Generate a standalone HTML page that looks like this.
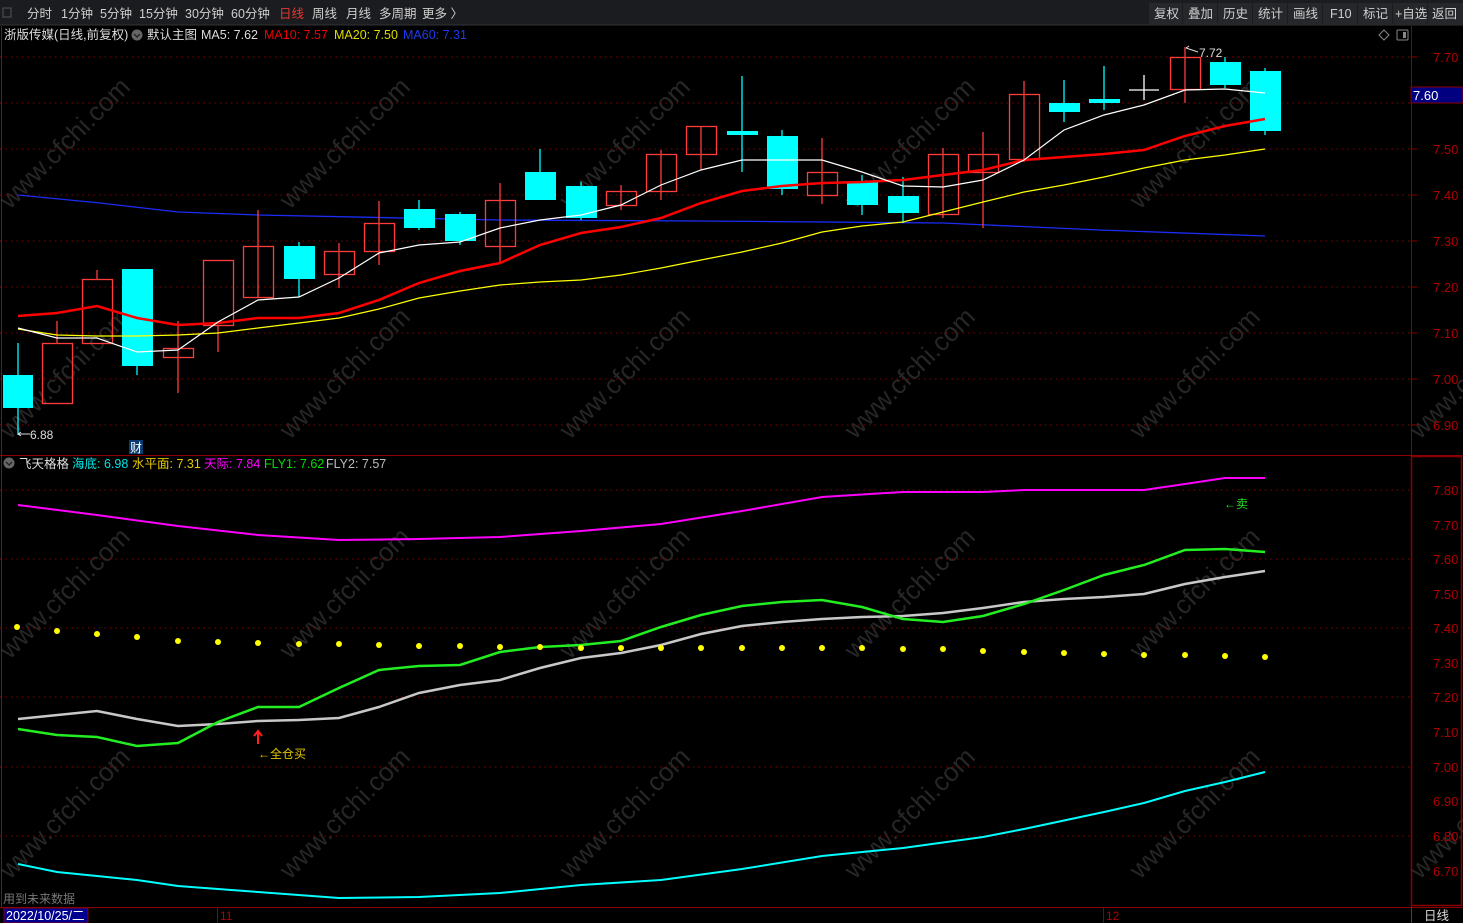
<!DOCTYPE html>
<html><head><meta charset="utf-8"><style>
html,body{margin:0;padding:0;background:#000;width:1463px;height:923px;overflow:hidden;font-family:"Liberation Sans","Noto Sans CJK SC",sans-serif;}
svg{display:block}
</style></head><body>
<svg width="1463" height="923" xmlns="http://www.w3.org/2000/svg" font-family="Liberation Sans, Noto Sans CJK SC, sans-serif">
<rect width="1463" height="923" fill="#000"/>
<!-- toolbar -->
<rect x="0" y="0" width="1463" height="25" fill="#1b1c1f"/>
<line x1="0" y1="25" x2="1463" y2="25" stroke="#333" />
<rect x="3" y="8" width="8" height="9" fill="none" stroke="#555"/>
<g font-size="12.5" fill="#cfcfcf">
<text x="27" y="18">分时</text><text x="61" y="18">1分钟</text><text x="100" y="18">5分钟</text><text x="139" y="18">15分钟</text><text x="185" y="18">30分钟</text><text x="231" y="18">60分钟</text>
<text x="279" y="18" fill="#e53935">日线</text><text x="312" y="18">周线</text><text x="346" y="18">月线</text><text x="379" y="18">多周期</text><text x="422" y="18">更多 〉</text>
</g>
<g fill="#26272b"><rect x="1149" y="3" width="33" height="21"/><rect x="1183" y="3" width="34" height="21"/><rect x="1218" y="3" width="34" height="21"/><rect x="1253" y="3" width="34" height="21"/><rect x="1288" y="3" width="34" height="21"/><rect x="1323" y="3" width="34" height="21"/><rect x="1358" y="3" width="34" height="21"/><rect x="1393" y="3" width="34" height="21"/><rect x="1428" y="3" width="35" height="21"/></g>
<g font-size="12.5" fill="#cfcfcf"><text x="1154" y="18">复权</text><text x="1188" y="18">叠加</text><text x="1223" y="18">历史</text><text x="1258" y="18">统计</text><text x="1293" y="18">画线</text><text x="1330" y="18">F10</text><text x="1363" y="18">标记</text><text x="1395" y="18">+自选</text><text x="1432" y="18">返回</text></g>
<!-- header line -->
<g font-size="12.5">
<text x="4" y="39" fill="#ddd">浙版传媒(日线,前复权)</text>
<circle cx="137" cy="35" r="5.5" fill="#666"/><path d="M134 34 l3 3 l3 -3" stroke="#222" fill="none" stroke-width="1.3"/>
<text x="147" y="39" fill="#ddd">默认主图</text>
<text x="201" y="39" fill="#ddd">MA5: 7.62</text>
<text x="264" y="39" fill="#e00">MA10: 7.57</text>
<text x="334" y="39" fill="#dd0">MA20: 7.50</text>
<text x="403" y="39" fill="#1b3cf0">MA60: 7.31</text>
</g>
<path d="M1384 30 l5 5 l-5 5 l-5 -5z" fill="none" stroke="#888"/>
<rect x="1397" y="30" width="11" height="10" rx="1" fill="none" stroke="#888"/><rect x="1403" y="32" width="3" height="6" fill="#888"/>
<!-- watermarks -->
<g fill="#262626" font-size="26" font-family="Liberation Sans, sans-serif">
<text transform="translate(10,210) rotate(-45)">www.cfchi.com</text>
<text transform="translate(290,210) rotate(-45)">www.cfchi.com</text>
<text transform="translate(570,210) rotate(-45)">www.cfchi.com</text>
<text transform="translate(855,210) rotate(-45)">www.cfchi.com</text>
<text transform="translate(1140,210) rotate(-45)">www.cfchi.com</text>
<text transform="translate(10,440) rotate(-45)">www.cfchi.com</text>
<text transform="translate(290,440) rotate(-45)">www.cfchi.com</text>
<text transform="translate(570,440) rotate(-45)">www.cfchi.com</text>
<text transform="translate(855,440) rotate(-45)">www.cfchi.com</text>
<text transform="translate(1140,440) rotate(-45)">www.cfchi.com</text>
<text transform="translate(1420,440) rotate(-45)">www.cfchi.com</text>
<text transform="translate(10,660) rotate(-45)">www.cfchi.com</text>
<text transform="translate(290,660) rotate(-45)">www.cfchi.com</text>
<text transform="translate(570,660) rotate(-45)">www.cfchi.com</text>
<text transform="translate(855,660) rotate(-45)">www.cfchi.com</text>
<text transform="translate(1140,660) rotate(-45)">www.cfchi.com</text>
<text transform="translate(10,880) rotate(-45)">www.cfchi.com</text>
<text transform="translate(290,880) rotate(-45)">www.cfchi.com</text>
<text transform="translate(570,880) rotate(-45)">www.cfchi.com</text>
<text transform="translate(855,880) rotate(-45)">www.cfchi.com</text>
<text transform="translate(1140,880) rotate(-45)">www.cfchi.com</text>
<text transform="translate(1420,880) rotate(-45)">www.cfchi.com</text>
</g>
<!-- main grid -->
<g stroke="#8a0000" stroke-dasharray="1.5,4" stroke-width="1">
<line x1="0" y1="57" x2="1410" y2="57"/><line x1="0" y1="103" x2="1410" y2="103"/><line x1="0" y1="149" x2="1410" y2="149"/><line x1="0" y1="195" x2="1410" y2="195"/><line x1="0" y1="241" x2="1410" y2="241"/><line x1="0" y1="287" x2="1410" y2="287"/><line x1="0" y1="333" x2="1410" y2="333"/><line x1="0" y1="379" x2="1410" y2="379"/><line x1="0" y1="425" x2="1410" y2="425"/>
<line x1="0" y1="490" x2="1410" y2="490"/><line x1="0" y1="559" x2="1410" y2="559"/><line x1="0" y1="628" x2="1410" y2="628"/><line x1="0" y1="697" x2="1410" y2="697"/><line x1="0" y1="767" x2="1410" y2="767"/><line x1="0" y1="836" x2="1410" y2="836"/>
</g>
<line x1="1.5" y1="26" x2="1.5" y2="907" stroke="#333"/>
<!-- right axis -->
<line x1="1411.5" y1="26" x2="1411.5" y2="907" stroke="#8a0000"/>
<line x1="0" y1="455.5" x2="1463" y2="455.5" stroke="#8a0000"/>
<rect x="1411.5" y="456.5" width="50" height="449" fill="none" stroke="#8a0000" stroke-width="1.5"/>
<g stroke="#8a0000"><line x1="1411" y1="57" x2="1417" y2="57"/><line x1="1411" y1="149" x2="1417" y2="149"/><line x1="1411" y1="195" x2="1417" y2="195"/><line x1="1411" y1="241" x2="1417" y2="241"/><line x1="1411" y1="287" x2="1417" y2="287"/><line x1="1411" y1="333" x2="1417" y2="333"/><line x1="1411" y1="379" x2="1417" y2="379"/><line x1="1411" y1="425" x2="1417" y2="425"/></g>
<g font-size="13" fill="#b00000">
<text x="1433" y="62">7.70</text><text x="1433" y="154">7.50</text><text x="1433" y="200">7.40</text><text x="1433" y="246">7.30</text><text x="1433" y="292">7.20</text><text x="1433" y="338">7.10</text><text x="1433" y="384">7.00</text><text x="1433" y="430">6.90</text>
<text x="1433" y="495">7.80</text><text x="1433" y="530">7.70</text><text x="1433" y="564">7.60</text><text x="1433" y="599">7.50</text><text x="1433" y="633">7.40</text><text x="1433" y="668">7.30</text><text x="1433" y="702">7.20</text><text x="1433" y="737">7.10</text><text x="1433" y="772">7.00</text><text x="1433" y="806">6.90</text><text x="1433" y="841">6.80</text><text x="1433" y="876">6.70</text>
</g>
<rect x="1411" y="87" width="52" height="16" fill="#000080" stroke="#8a0000"/>
<text x="1413" y="100" font-size="13" fill="#fff">7.60</text>
<!-- MA60 blue -->
<polyline fill="none" stroke="#1b2cf5" stroke-width="1.3" points="18,195 100,203 178,212 258,215 500,220 700,221 943,223 1100,230 1265,236"/>
<!-- candles -->
<g stroke-width="1.3">
<!-- wicks -->
<g stroke="#00ffff">
<line x1="18" y1="343" x2="18" y2="435"/><line x1="137" y1="269" x2="137" y2="375"/><line x1="299" y1="242" x2="299" y2="297"/><line x1="419" y1="200" x2="419" y2="230"/><line x1="460" y1="212" x2="460" y2="245"/><line x1="540" y1="149" x2="540" y2="200"/><line x1="581" y1="182" x2="581" y2="220"/><line x1="742" y1="76" x2="742" y2="172"/><line x1="782" y1="130" x2="782" y2="195"/><line x1="862" y1="175" x2="862" y2="215"/><line x1="903" y1="177" x2="903" y2="223"/><line x1="1064" y1="80" x2="1064" y2="122"/><line x1="1104" y1="66" x2="1104" y2="110"/><line x1="1225" y1="57" x2="1225" y2="88"/><line x1="1265" y1="68" x2="1265" y2="135"/>
</g>
<g stroke="#ff3c3c">
<line x1="57" y1="321" x2="57" y2="343"/><line x1="97" y1="270" x2="97" y2="279"/><line x1="178" y1="321" x2="178" y2="393"/><line x1="218" y1="325" x2="218" y2="352"/><line x1="258" y1="210" x2="258" y2="297"/><line x1="339" y1="243" x2="339" y2="288"/><line x1="379" y1="201" x2="379" y2="265"/><line x1="500" y1="183" x2="500" y2="262"/><line x1="621" y1="185" x2="621" y2="210"/><line x1="661" y1="150" x2="661" y2="200"/><line x1="701" y1="126" x2="701" y2="170"/><line x1="822" y1="138" x2="822" y2="204"/><line x1="943" y1="148" x2="943" y2="218"/><line x1="983" y1="132" x2="983" y2="228"/><line x1="1024" y1="81" x2="1024" y2="162"/><line x1="1185" y1="47" x2="1185" y2="103"/>
</g>
<!-- cyan bodies -->
<g fill="#00ffff">
<rect x="3" y="375" width="30" height="33"/><rect x="122" y="269" width="31" height="97"/><rect x="284" y="246" width="31" height="33"/><rect x="404" y="209" width="31" height="19"/><rect x="445" y="214" width="31" height="27"/><rect x="525" y="172" width="31" height="28"/><rect x="566" y="186" width="31" height="32"/><rect x="727" y="131" width="31" height="4"/><rect x="767" y="136" width="31" height="53"/><rect x="847" y="182" width="31" height="23"/><rect x="888" y="196" width="31" height="17"/><rect x="1049" y="103" width="31" height="9"/><rect x="1089" y="99" width="31" height="4"/><rect x="1210" y="62" width="31" height="23"/><rect x="1250" y="71" width="31" height="60"/>
</g>
<!-- red hollow bodies -->
<g fill="none" stroke="#ff3c3c">
<rect x="42.5" y="343.5" width="30" height="60"/><rect x="82.5" y="279.5" width="30" height="64"/><rect x="163.5" y="348.5" width="30" height="9"/><rect x="203.5" y="260.5" width="30" height="65"/><rect x="243.5" y="246.5" width="30" height="51"/><rect x="324.5" y="251.5" width="30" height="23"/><rect x="364.5" y="223.5" width="30" height="28"/><rect x="485.5" y="200.5" width="30" height="46"/><rect x="606.5" y="191.5" width="30" height="14"/><rect x="646.5" y="154.5" width="30" height="37"/><rect x="686.5" y="126.5" width="30" height="28"/><rect x="807.5" y="172.5" width="30" height="23"/><rect x="928.5" y="154.5" width="30" height="60"/><rect x="968.5" y="154.5" width="30" height="18"/><rect x="1009.5" y="94.5" width="30" height="65"/><rect x="1170.5" y="57.5" width="30" height="32"/>
</g>
<g stroke="#fff"><line x1="1129" y1="90" x2="1159" y2="90"/><line x1="1144" y1="75" x2="1144" y2="100"/></g>
</g>
<!-- MAs -->
<polyline fill="none" stroke="#ffff00" stroke-width="1.2" points="18,329 57,335 97,336 137,336 178,335 218,333 258,328 299,323 339,318 379,309 419,298 460,291 500,285 540,282 581,280 621,275 661,268 701,260 742,252 782,243 822,232 862,226 903,222 943,212 983,202 1024,192 1064,185 1104,177 1144,168 1185,160 1225,155 1265,149"/>
<polyline fill="none" stroke="#ff0000" stroke-width="2.5" points="18,316 57,313 97,306 137,318 178,325 218,323 258,318 299,318 339,313 379,300 419,283 460,271 500,263 540,245 581,233 621,227 661,218 701,203 742,191 782,186 822,183 862,182 903,180 943,175 983,170 1024,160 1064,157 1104,154 1144,150 1185,136 1225,126 1265,119"/>
<polyline fill="none" stroke="#ffffff" stroke-width="1.2" points="18,328 57,338 97,338 137,352 178,350 218,322 258,300 299,297 339,278 379,253 419,245 460,242 500,228 540,220 581,215 621,205 661,185 701,170 742,160 782,160 822,160 862,172 903,186 943,187 983,180 1024,160 1064,130 1104,115 1144,105 1185,90 1225,89 1265,93"/>
<text x="30" y="439" font-size="12" fill="#ddd">6.88</text><path d="M18 434 h12 M18 434 l3 -2 M18 434 l3 2" stroke="#ddd"/>
<text x="1199" y="57" font-size="12" fill="#ddd">7.72</text><path d="M1186 48 l12 4 M1186 48 l3 -2" stroke="#ddd" fill="none"/>
<rect x="129" y="440" width="14" height="14" fill="#0a3a70"/><text x="130" y="452" font-size="12" fill="#fff">财</text>
<!-- lower panel header -->
<circle cx="9" cy="463" r="5.5" fill="#666"/><path d="M6 462 l3 3 l3 -3" stroke="#222" fill="none" stroke-width="1.3"/>
<g font-size="12.5"><text x="19" y="468" fill="#ddd">飞天格格</text><text x="72" y="468" fill="#00e5e5">海底: 6.98</text><text x="132" y="468" fill="#e5c800">水平面: 7.31</text><text x="204" y="468" fill="#ff00ff">天际: 7.84</text><text x="264" y="468" fill="#00e000">FLY1: 7.62</text><text x="326" y="468" fill="#bbb">FLY2: 7.57</text></g>
<!-- lower lines -->
<polyline fill="none" stroke="#ff00ff" stroke-width="2" points="18,505 97,515 178,526 258,535 339,540 419,539 500,537 581,531 661,524 742,511 822,497 903,492 983,492 1024,490 1144,490 1185,484 1225,478 1265,478"/>
<polyline fill="none" stroke="#c8c8c8" stroke-width="2.5" points="18,719 97,711 137,719 178,726 218,724 258,721 299,720 339,718 379,707 419,693 460,685 500,680 540,668 581,658 621,653 661,645 701,634 742,626 782,622 822,619 862,617 903,616 943,613 983,608 1024,602 1064,599 1104,597 1144,594 1185,584 1225,577 1265,571"/>
<polyline fill="none" stroke="#22ee22" stroke-width="2.5" points="18,729 57,735 97,737 137,746 178,743 218,722 258,707 299,707 339,688 379,670 419,666 460,665 500,652 540,647 581,645 621,641 661,627 701,615 742,606 782,602 822,600 862,607 903,619 943,622 983,616 1024,604 1064,590 1104,575 1144,565 1185,550 1225,549 1265,552"/>
<polyline fill="none" stroke="#00ffff" stroke-width="2" points="18,864 57,872 137,880 178,886 258,892 339,898 419,897 500,893 581,885 661,880 742,869 822,856 903,848 983,837 1024,829 1104,812 1144,803 1185,791 1225,782 1265,772"/>
<g fill="#ffff00">
<circle cx="17" cy="627" r="3"/><circle cx="57" cy="631" r="3"/><circle cx="97" cy="634" r="3"/><circle cx="137" cy="637" r="3"/><circle cx="178" cy="641" r="3"/><circle cx="218" cy="642" r="3"/><circle cx="258" cy="643" r="3"/><circle cx="299" cy="644" r="3"/><circle cx="339" cy="644" r="3"/><circle cx="379" cy="645" r="3"/><circle cx="419" cy="646" r="3"/><circle cx="460" cy="646" r="3"/><circle cx="500" cy="647" r="3"/><circle cx="540" cy="647" r="3"/><circle cx="581" cy="648" r="3"/><circle cx="621" cy="648" r="3"/><circle cx="661" cy="648" r="3"/><circle cx="701" cy="648" r="3"/><circle cx="742" cy="648" r="3"/><circle cx="782" cy="648" r="3"/><circle cx="822" cy="648" r="3"/><circle cx="862" cy="648" r="3"/><circle cx="903" cy="649" r="3"/><circle cx="943" cy="649" r="3"/><circle cx="983" cy="651" r="3"/><circle cx="1024" cy="652" r="3"/><circle cx="1064" cy="653" r="3"/><circle cx="1104" cy="654" r="3"/><circle cx="1144" cy="655" r="3"/><circle cx="1185" cy="655" r="3"/><circle cx="1225" cy="656" r="3"/><circle cx="1265" cy="657" r="3"/>
</g>
<path d="M258 744 v-12 M254 736 l4 -5 l4 5" stroke="#ff2020" stroke-width="2" fill="none"/>
<text x="258" y="758" font-size="12" fill="#e5c800">←全仓买</text>
<text x="1224" y="508" font-size="12" fill="#22dd22">←卖</text>
<text x="3" y="903" font-size="12" fill="#777">用到未来数据</text>
<!-- bottom bar -->
<line x1="0" y1="907.5" x2="1463" y2="907.5" stroke="#8a0000"/>
<rect x="4" y="908" width="84" height="15" fill="#000090" stroke="#8a0000"/>
<text x="6" y="920" font-size="12.5" fill="#fff">2022/10/25/二</text>
<line x1="217.5" y1="908" x2="217.5" y2="923" stroke="#8a0000"/><text x="220" y="920" font-size="12" fill="#b00000">11</text>
<line x1="1103.5" y1="908" x2="1103.5" y2="923" stroke="#8a0000"/><text x="1106" y="920" font-size="12" fill="#b00000">12</text>
<line x1="1411.5" y1="907" x2="1411.5" y2="923" stroke="#444"/>
<text x="1424" y="920" font-size="12.5" fill="#ddd">日线</text>
</svg>
</body></html>
